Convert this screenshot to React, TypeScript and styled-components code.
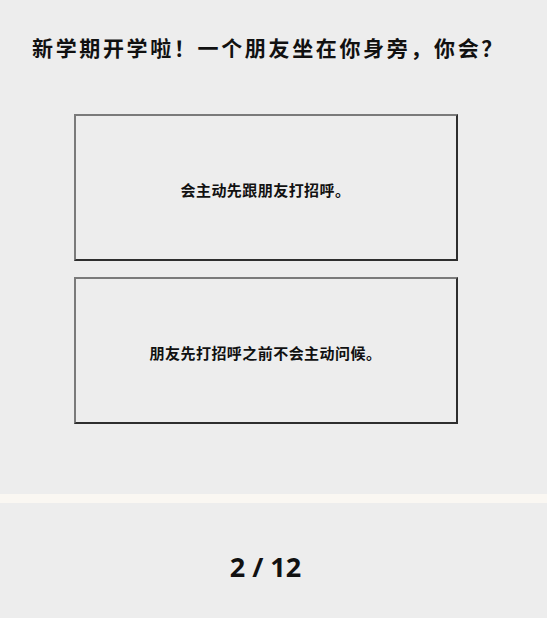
import React from "react";
import styled, { createGlobalStyle } from "styled-components";

const GlobalStyle = createGlobalStyle`
  html, body {
    margin: 0;
    padding: 0;
    background-color: #ededed;
  }
  body {
    font-family: "Noto Sans CJK SC", "Noto Sans", sans-serif;
    color: #111;
  }
`;

const options = ["会主动先跟朋友打招呼。", "朋友先打招呼之前不会主动问候。"];

const App = () => {
  return (
    <>
      <GlobalStyle />
      <Page>
        <Question>新学期开学啦！一个朋友坐在你身旁，你会？</Question>
        <OptionList>
          {options.map((text) => (
            <OptionBox key={text}>{text}</OptionBox>
          ))}
        </OptionList>
        <Divider />
        <Footer>
          <Counter>2 / 12</Counter>
        </Footer>
      </Page>
    </>
  );
};

export default App;

const Page = styled.div`
  display: flex;
  flex-direction: column;
  width: 547px;
  height: 618px;
  background-color: #ededed;
`;

const Question = styled.h1`
  margin: 0;
  padding: 34px 0 0 32px;
  font-size: 21px;
  line-height: 26px;
  font-weight: 700;
  letter-spacing: 2.65px;
  color: #111;
`;

const OptionList = styled.div`
  display: flex;
  flex-direction: column;
  align-items: center;
  gap: 16px;
  margin-top: 54px;
  padding-right: 16px;
`;

const OptionBox = styled.div`
  display: flex;
  justify-content: center;
  align-items: center;
  box-sizing: border-box;
  width: 384px;
  height: 147px;
  padding-top: 4px;
  border-style: solid;
  border-width: 2px;
  border-color: #7a7a7a #2e2e2e #2e2e2e #7a7a7a;
  font-size: 15px;
  font-weight: 700;
  letter-spacing: 0.45px;
  color: #111;
  cursor: pointer;
`;

const Divider = styled.div`
  height: 9px;
  margin-top: 70px;
  background-color: #faf7f2;
`;

const Footer = styled.div`
  display: flex;
  flex: 1;
  justify-content: center;
  align-items: center;
  padding: 12px 16px 0 0;
`;

const Counter = styled.div`
  font-family: "Open Sans", "Noto Sans", sans-serif;
  font-size: 27px;
  font-weight: 700;
  color: #111;
`;
